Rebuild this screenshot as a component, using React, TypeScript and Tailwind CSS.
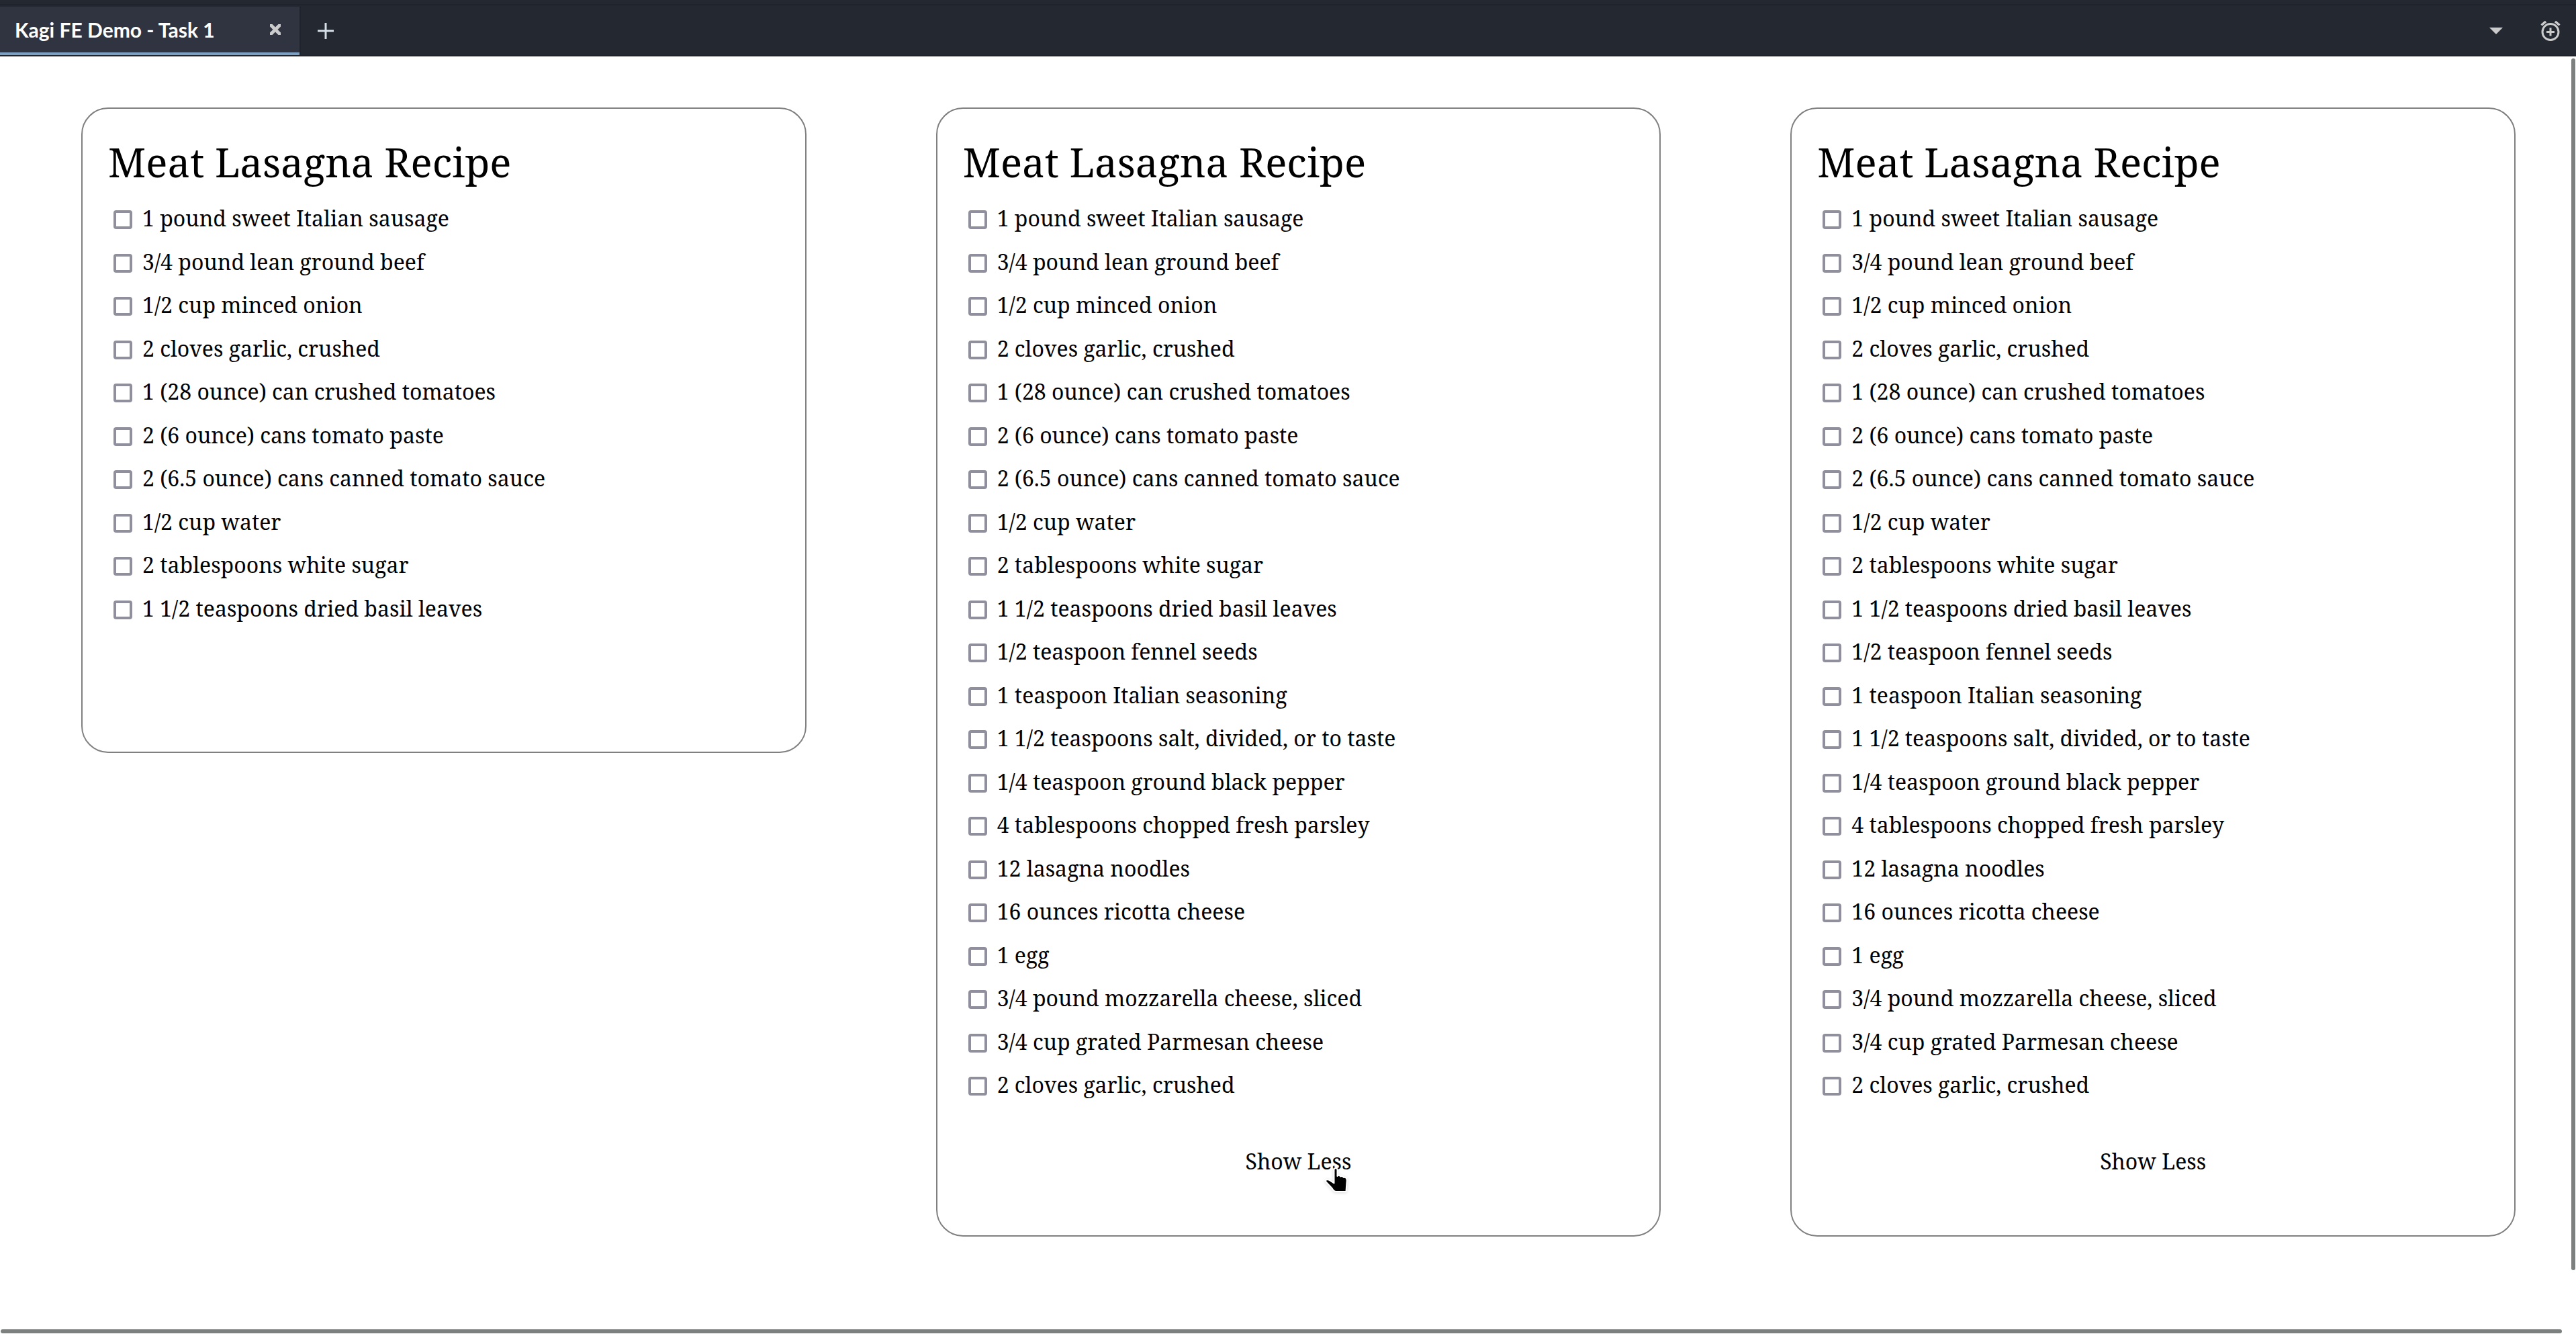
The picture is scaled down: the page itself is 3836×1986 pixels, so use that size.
import { useId, useState } from "react";

const INGREDIENTS = [
  "1 pound sweet Italian sausage",
  "3/4 pound lean ground beef",
  "1/2 cup minced onion",
  "2 cloves garlic, crushed",
  "1 (28 ounce) can crushed tomatoes",
  "2 (6 ounce) cans tomato paste",
  "2 (6.5 ounce) cans canned tomato sauce",
  "1/2 cup water",
  "2 tablespoons white sugar",
  "1 1/2 teaspoons dried basil leaves",
  "1/2 teaspoon fennel seeds",
  "1 teaspoon Italian seasoning",
  "1 1/2 teaspoons salt, divided, or to taste",
  "1/4 teaspoon ground black pepper",
  "4 tablespoons chopped fresh parsley",
  "12 lasagna noodles",
  "16 ounces ricotta cheese",
  "1 egg",
  "3/4 pound mozzarella cheese, sliced",
  "3/4 cup grated Parmesan cheese",
  "2 cloves garlic, crushed",
];

const COLLAPSED_COUNT = 10;

function TabBar() {
  return (
    <header className="flex h-[84px] flex-col border-b-2 border-[#1f232c] bg-[#242831] font-['Lato',sans-serif]">
      <div className="h-2 shrink-0 border-b-2 border-[#1f232c]" />
      <div className="flex flex-1 items-stretch pt-0.5">
        <div className="flex w-[446px] items-center justify-between border-b-4 border-[#7ba0c4] bg-[#2f3440] pr-[26px] pl-[22px]">
          <span className="text-[30px] leading-9 font-bold text-white">Kagi FE Demo - Task 1</span>
          <button type="button" aria-label="Close tab" className="flex size-5 items-center justify-center">
            <svg viewBox="0 0 16 16" className="size-4" fill="none" stroke="#cbcbcb" strokeWidth="5">
              <path d="M0 0l16 16M16 0L0 16" />
            </svg>
          </button>
        </div>
        <button type="button" aria-label="New tab" className="flex items-center border-l-2 border-[#1f232c] px-[25px]">
          <svg viewBox="0 0 24 24" className="size-6" fill="none" stroke="#d5dde6" strokeWidth="3">
            <path d="M12 0v24M0 12h24" />
          </svg>
        </button>
        <div className="ml-auto flex items-center gap-14 pr-[23px]">
          <button type="button" aria-label="List tabs">
            <svg viewBox="0 0 20 10" className="h-2.5 w-5" fill="#cbcbcb">
              <path d="M0 0h20L10 10z" />
            </svg>
          </button>
          <button type="button" aria-label="Add alarm">
            <svg viewBox="0 0 30 30" className="size-[30px]" fill="none" stroke="#cbcbcb" strokeWidth="3">
              <circle cx="15" cy="16.5" r="12" />
              <path d="M15 10.5v12M9 16.5h12" />
              <path d="M1.5 6.5l6.5-5.5M28.5 6.5l-6.5-5.5" strokeWidth="3.5" />
            </svg>
          </button>
        </div>
      </div>
    </header>
  );
}

function Ingredient({ text }: { text: string }) {
  const id = useId();
  return (
    <li className="flex h-16 items-center gap-[15px] pl-2 even:h-[65px]">
      <input
        id={id}
        type="checkbox"
        className="mt-1 size-7 shrink-0 appearance-none rounded-sm border-4 border-[#8f8f9d] bg-white checked:bg-[#0060df]"
      />
      <label htmlFor={id} className="text-[32px] leading-[44px]">
        {text}
      </label>
    </li>
  );
}

function HandCursor() {
  return (
    <svg
      viewBox="0 0 36 40"
      className="pointer-events-none absolute top-[41px] left-[119px] h-10 w-9 drop-shadow-sm"
      aria-hidden="true"
    >
      <path
        d="M13.5 3.5a2.5 2.500 0 0 1 5 0V13q2-2.500 5 0.500q2.500-1.500 4.500 1.500q2.500-1 4 1.500q1 2 .500 5L31.500 36H16Q13 35.500 10.500 31L1.500 21.500Q0.500 18.500 3.500 18q3 .200 5.500 2.500l4.500 3z"
        fill="#000"
        stroke="#fff"
        strokeWidth="2"
        strokeLinejoin="round"
      />
    </svg>
  );
}

function RecipeCard({ initiallyOpen, togglable, hovered }: { initiallyOpen: boolean; togglable: boolean; hovered?: boolean }) {
  const [open, setOpen] = useState(initiallyOpen);
  const items = open ? INGREDIENTS : INGREDIENTS.slice(0, COLLAPSED_COUNT);
  return (
    <article className="flex flex-col rounded-[40px] border-2 border-[#808080] px-[38px] pt-[38px] pb-[78px]">
      <h2 className="text-[60px] leading-[82px]">Meat Lasagna Recipe</h2>
      <ul className="mt-[11px]">
        {items.map((text, i) => (
          <Ingredient key={i} text={text} />
        ))}
      </ul>
      {togglable ? (
        <button
          type="button"
          onClick={() => setOpen(!open)}
          className="relative mt-[50px] h-16 cursor-pointer self-center text-[32px] leading-[44px]"
        >
          {open ? "Show Less" : "Show More"}
          {hovered && <HandCursor />}
        </button>
      ) : (
        <div className="h-[103px]" />
      )}
    </article>
  );
}

export default function App() {
  return (
    <div className="relative flex min-h-screen flex-col bg-white font-['Noto_Serif',serif] text-black">
      <TabBar />
      <main className="grid flex-1 grid-cols-3 items-start gap-x-[193px] pt-[76px] pr-[90px] pb-[145px] pl-[121px]">
        <RecipeCard initiallyOpen={false} togglable={false} />
        <RecipeCard initiallyOpen togglable hovered />
        <RecipeCard initiallyOpen togglable />
      </main>
      <div className="absolute top-[87px] right-[1px] bottom-[95px] w-1.5 rounded-full bg-[#7c8180]" />
      <div className="absolute right-[21px] bottom-[1px] left-[1px] h-1.5 rounded-full bg-[#7c8180]" />
    </div>
  );
}
